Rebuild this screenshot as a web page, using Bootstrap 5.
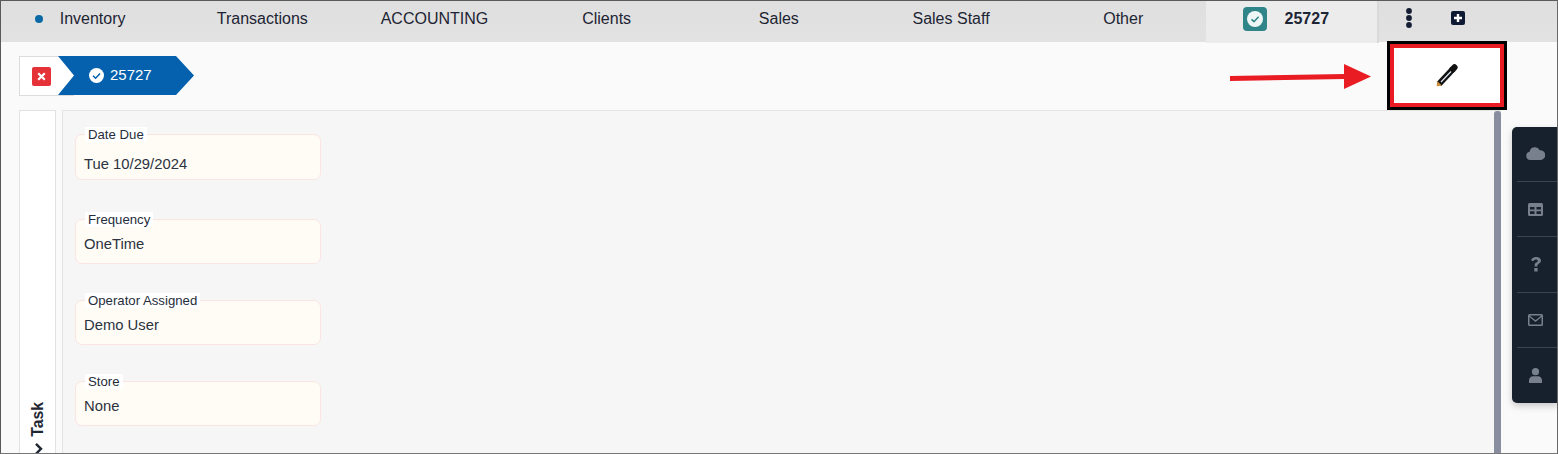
<!DOCTYPE html>
<html lang="en">
<head>
<meta charset="utf-8">
<title>Task 25727</title>
<link href="https://cdn.jsdelivr.net/npm/bootstrap@5.3.0/dist/css/bootstrap.min.css" rel="stylesheet">
<style>
html,body{height:100%;margin:0;overflow:hidden}
body{font-family:"Liberation Sans",Arial,sans-serif;font-size:14px;color:#1f2733;background:#fafafa}
.shell{position:relative;height:454px;border:1px solid #5a5a5a;border-right-color:#6a6a6a;border-bottom-color:#777;overflow:hidden}
.topbar{height:41px;background:linear-gradient(#dfdfdf,#e2e2e2);padding-left:3px}
.topitem{flex:0 0 172.2px;color:#1d2433;text-decoration:none;font-size:16px;line-height:33px;height:33px;margin-bottom:6px;text-align:center}
.topfirst{padding-right:20px}
.topdot{width:8px;height:8px;border-radius:50%;background:#0b6aa6;margin-right:17px}
.tabon{height:42px;margin-left:-3px;flex:0 0 173px;background:#ececec;border-right:2px solid #d9d9d9;font-weight:700;color:#1d2433;font-size:16px;padding:0 12px 7px 0;gap:18px}
.tabbadge{width:24px;height:24px;border-radius:4px;background:#2f8587}
.tabicons{margin-left:26px;gap:38px;padding-bottom:7px}
.crumbrow{height:68px;padding:14px 0 0 18px}
.crumbclose{width:55px;height:40px;background:#fff;border:1px solid #dcdcdc;border-right:0;padding-left:12px}
.closebox{width:19px;height:19px;background:#e53239;border-radius:2px}
.crumbblue{width:136px;height:39px;margin-left:-16px;background:#0560ad;color:#fff;font-size:15px;padding-left:31px;gap:6px;clip-path:polygon(0 0,118px 0,136px 50%,118px 100%,0 100%,16px 50%)}
.workrow{height:344px;padding-left:18px}
.sidetab{width:37px;background:#fff;border:1px solid #e2e2e2;border-bottom:0;position:relative;margin-right:6px}
.sidelabel{position:absolute;left:9px;bottom:-2px;writing-mode:vertical-rl;transform:rotate(180deg);font-weight:700;font-size:15.8px;color:#1f2733;line-height:18px;gap:5px}
.panel{width:1439px;background:#f6f6f6;border:1px solid #e4e4e4;border-bottom:0;padding:23px 0 0 12px;position:relative}
.fieldbox{width:246px;height:45px;background:#fffcf6;border:1px solid #fbe5e2;border-radius:7px;position:relative;padding:16px 8px 0;margin-bottom:36px}
.fieldtall{height:46px;padding-top:21px;margin-bottom:39px}
.fieldname{position:absolute;left:9px;top:-8px;background:#fff;padding:0 3px;font-size:13.2px;line-height:15px;color:#262d3a}
.fieldvalue{font-size:14.8px;line-height:17px;color:#2b3240}
.scrollthumb{position:absolute;top:0;right:-1px;bottom:0;width:7px;background:#888da0;border-radius:3px 3px 0 0}
.editbox{position:absolute;left:1386px;top:40px;width:120px;height:69px;border:3px solid #000;background:#fff;box-shadow:inset 0 0 0 4px #e91c23}
.pointer{position:absolute;left:1228px;top:60px}
.rail{position:absolute;left:1511px;top:126px;width:47px;height:276px;background:#16212d;border-radius:5px 0 0 5px;box-shadow:0 3px 7px rgba(0,0,0,.2)}
.railcell{height:55.4px;margin-left:5px;border-bottom:1px solid #3b4552;padding-right:5px}
.railcell:last-child{border-bottom:0}
.railcell svg{fill:#79808d}
.cloudglyph{margin-bottom:2px}
</style>
</head>
<body>
<div class="shell">
  <nav class="topbar d-flex align-items-center">
    <a class="topitem topfirst d-flex align-items-center justify-content-center" href="#"><span class="topdot"></span>Inventory</a>
    <a class="topitem" href="#">Transactions</a>
    <a class="topitem" href="#">ACCOUNTING</a>
    <a class="topitem" href="#">Clients</a>
    <a class="topitem" href="#">Sales</a>
    <a class="topitem" href="#">Sales Staff</a>
    <a class="topitem" href="#">Other</a>
    <div class="tabon d-flex align-items-center justify-content-center align-self-start">
      <span class="tabbadge d-flex align-items-center justify-content-center">
        <svg width="16" height="16" viewBox="0 0 16 16"><circle cx="8" cy="8" r="8" fill="#eef6f6"/><path d="M4.500 8.300 7 10.700 11.600 5.800" fill="none" stroke="#2f8587" stroke-width="1.600"/></svg>
      </span>
      <span>25727</span>
    </div>
    <div class="tabicons d-flex align-items-center">
      <svg width="8" height="20" viewBox="0 0 8 20" fill="#141d33"><circle cx="4" cy="3" r="2.900"/><circle cx="4" cy="10" r="2.900"/><circle cx="4" cy="17" r="2.900"/></svg>
      <svg width="14" height="14" viewBox="0 0 14 14"><rect width="14" height="14" rx="2" fill="#0e1a33"/><path d="M7 3v8M3 7h8" stroke="#fff" stroke-width="2.400"/></svg>
    </div>
  </nav>

  <div class="crumbrow d-flex align-items-start">
    <div class="crumbclose d-flex align-items-center">
      <span class="closebox d-flex align-items-center justify-content-center">
        <svg width="9" height="9" viewBox="0 0 9 9"><path d="M1.200 1.200 7.800 7.800M7.800 1.200 1.200 7.800" stroke="#fff" stroke-width="2.200"/></svg>
      </span>
    </div>
    <div class="crumbblue d-flex align-items-center">
      <svg width="15" height="15" viewBox="0 0 16 16"><circle cx="8" cy="8" r="8" fill="#fff"/><path d="M4.300 8.300 7 10.900 11.800 5.800" fill="none" stroke="#0560ad" stroke-width="1.600"/></svg>
      <span>25727</span>
    </div>
  </div>

  <div class="workrow d-flex">
    <div class="sidetab">
      <div class="sidelabel d-flex align-items-center">
        <svg width="14" height="14" viewBox="0 0 14 14"><path d="M9 2 4 7l5 5" fill="none" stroke="#1f2733" stroke-width="2.400"/></svg>
        <span>Task</span>
      </div>
    </div>
    <main class="panel">
      <div class="fieldbox fieldtall">
        <span class="fieldname">Date Due</span>
        <div class="fieldvalue">Tue 10/29/2024</div>
      </div>
      <div class="fieldbox">
        <span class="fieldname">Frequency</span>
        <div class="fieldvalue">OneTime</div>
      </div>
      <div class="fieldbox">
        <span class="fieldname">Operator Assigned</span>
        <div class="fieldvalue">Demo User</div>
      </div>
      <div class="fieldbox">
        <span class="fieldname">Store</span>
        <div class="fieldvalue">None</div>
      </div>
      <div class="scrollthumb"></div>
    </main>
  </div>

  <svg class="pointer" width="142" height="38" viewBox="0 0 142 38" aria-hidden="true"><path d="M115 3 115 28 142 15.500Z" fill="#e91c23"/><path d="M1 17.500 116 15.500" stroke="#e91c23" stroke-width="5"/></svg>

  <button class="editbox d-flex align-items-center justify-content-center p-0" type="button" aria-label="Edit">
    <svg width="22" height="23" viewBox="0 0 22 23"><path d="M3 20 17 5" stroke="#111" stroke-width="6.200"/><path d="M16.500 5.500 18.500 3.400" stroke="#111" stroke-width="6.200" stroke-linecap="round"/><path d="M5 18 15 7.500" stroke="#dfe7f0" stroke-width="1.200"/><path d="M.7 22.300 1.300 17 5.800 21.500Z" fill="#c98a3a"/></svg>
  </button>

  <aside class="rail d-flex flex-column">
    <div class="railcell d-flex align-items-center justify-content-center"><svg class="cloudglyph" width="19" height="14" viewBox="0 0 19 14"><path d="M4.400 14A4.200 4.200 0 0 1 3.600 5.700 5.400 5.400 0 0 1 13.700 4.200 4.900 4.900 0 0 1 15 14Z"/></svg></div>
    <div class="railcell d-flex align-items-center justify-content-center"><svg width="15" height="13" viewBox="0 0 15 13"><path fill-rule="evenodd" d="M1.500 0h12A1.500 1.500 0 0 1 15 1.500v10a1.500 1.500 0 0 1-1.500 1.500h-12A1.500 1.500 0 0 1 0 11.500v-10A1.500 1.500 0 0 1 1.500 0ZM2 4v2.500h4.500V4Zm6.500 0v2.500H13V4ZM2 8.300V11h4.500V8.300Zm6.500 0V11H13V8.300Z"/></svg></div>
    <div class="railcell d-flex align-items-center justify-content-center"><svg width="10" height="15" viewBox="0 0 10 15"><path d="M5 0C2.400 0 .7 1.300 0 3.300l2.300 1C2.700 3.200 3.500 2.400 4.900 2.400c1.100 0 1.900.6 1.900 1.400 0 .8-.6 1.200-1.500 1.800C4 6.300 3.600 7.200 3.600 9.500h2.700c0-1.400.3-1.900 1.300-2.600C9 6 10 5.100 10 3.600 10 1.500 7.900 0 5 0ZM3.300 11h3.300v3.500H3.300Z"/></svg></div>
    <div class="railcell d-flex align-items-center justify-content-center"><svg width="15" height="12" viewBox="0 0 15 12"><path fill-rule="evenodd" d="M1.500 0h12A1.500 1.500 0 0 1 15 1.500v9a1.500 1.500 0 0 1-1.500 1.500h-12A1.500 1.500 0 0 1 0 10.500v-9A1.500 1.500 0 0 1 1.500 0Zm.1 1.500 5.900 4.700 5.900-4.700Zm-.1 1.600v7.400h12V3.100L7.500 8Z"/></svg></div>
    <div class="railcell d-flex align-items-center justify-content-center"><svg width="13" height="15" viewBox="0 0 13 15"><circle cx="6.500" cy="3.700" r="3.600"/><path d="M0 15v-2.400C0 10 1.800 8.300 4 8.300h5c2.200 0 4 1.700 4 4.300V15Z"/></svg></div>
  </aside>
</div>
</body>
</html>
